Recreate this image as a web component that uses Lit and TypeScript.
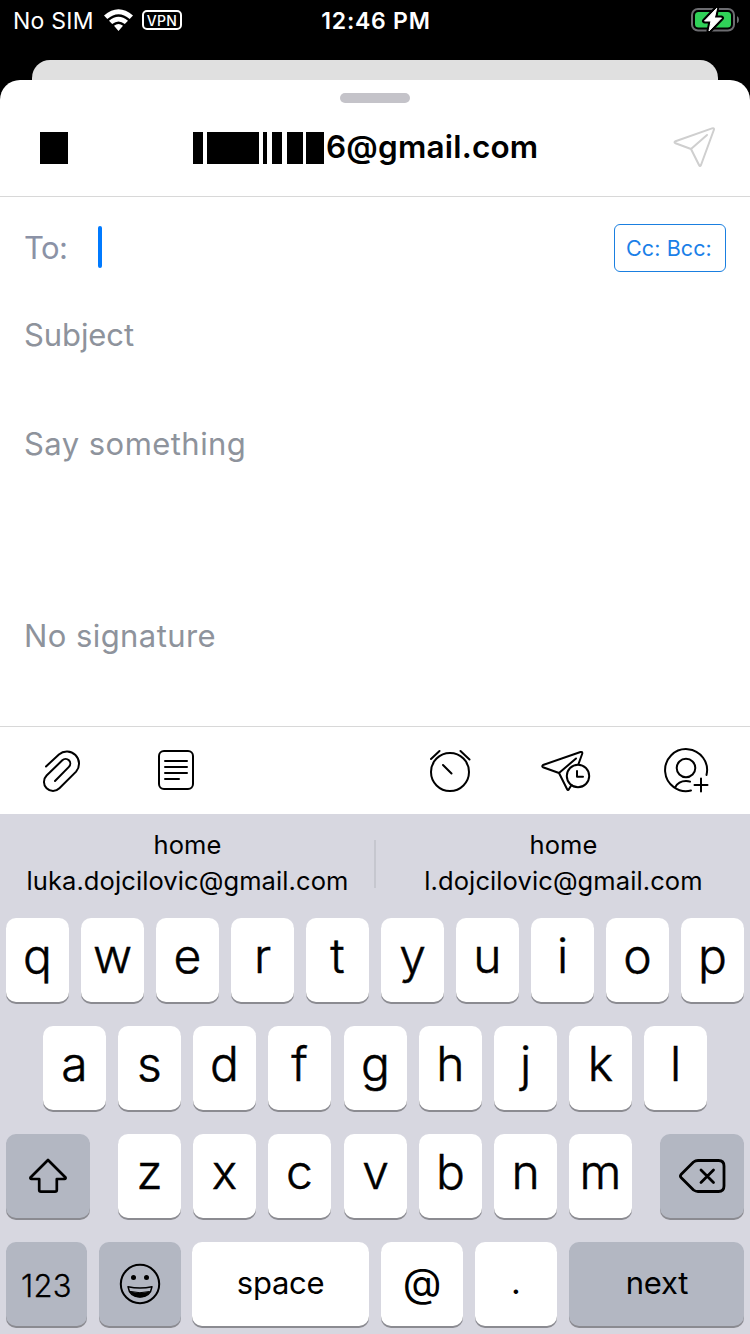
import { LitElement, html, css } from "lit";
import { customElement } from "lit/decorators.js";

@customElement("app-root")
export class AppRoot extends LitElement {
  static styles = css`
    :host { display: flex; flex-direction: column; width: 750px; height: 1334px; overflow: hidden; background: #000; color: #000; font-family: Inter, "Liberation Sans", sans-serif; }
    * { box-sizing: border-box; }
    svg { display: block; flex: none; fill: none; stroke: #000; stroke-width: 2; stroke-linecap: round; stroke-linejoin: round; }
    .status { display: grid; grid-template-columns: 1fr auto 1fr; align-items: center; height: 40px; margin-bottom: 20px; padding: 0 10px 0 13px; color: #fff; font-size: 23px; line-height: 38px; }
    .left { display: flex; align-items: center; }
    .carrier { width: 91px; letter-spacing: 0.25px; white-space: nowrap; padding-top: 2px; }
    .wifi { fill: #fff; stroke: none; }
    .vpn { margin-left: 9px; width: 40px; height: 20px; border: 2px solid #fff; border-radius: 5px; font-size: 14px; font-weight: 500; line-height: 17px; text-align: center; letter-spacing: 0.4px; }
    .time { font-weight: 600; letter-spacing: 0.75px; padding: 2px 1px 0 0; }
    .battery { justify-self: end; }
    .under { height: 20px; margin: 0 32px; background: #e0e0e0; border-radius: 18px 18px 0 0; flex: none; }
    .sheet { height: 734px; flex: none; background: #fff; border-radius: 20px 20px 0 0; display: flex; flex-direction: column; }
    .grab { width: 70px; height: 10px; border-radius: 5px; background: #c4c3c9; margin: 13px auto 0 340px; }
    .head { height: 94px; border-bottom: 1px solid #d8d8d8; display: flex; align-items: flex-start; padding: 23px 34px 0 40px; }
    .square { width: 28px; height: 32px; margin-top: 6px; background: #000; }
    .from { display: flex; margin-left: 125px; width: 480px; font-size: 31.5px; font-weight: 600; line-height: 41px; }
    .masks { flex: none; width: 133px; }
    .address { letter-spacing: 0.2px; }
    .fields { height: 529px; padding: 0 24px; color: #8e939c; font-size: 31px; }
    .to { display: flex; align-items: center; height: 100px; color: #8b92a6; }
    .tolabel { width: 74px; letter-spacing: -0.6px; }
    .caret { width: 4px; height: 42px; border-radius: 2px; background: #007aff; }
    .cc { margin: 2px 0 0 auto; width: 112px; height: 48px; border: 1px solid #1a7fe0; border-radius: 6px; color: #1a7fe8; font-size: 21.5px; line-height: 47px; text-align: center; letter-spacing: 0.1px; white-space: nowrap; padding-right: 2px; }
    .subject { line-height: 76px; letter-spacing: -0.1px; }
    .body { line-height: 142px; height: 194px; letter-spacing: 0.45px; }
    .sign { line-height: 138px; letter-spacing: 0.42px; }
    .tools { height: 88px; border-top: 1px solid #d8d8d8; display: flex; align-items: center; padding: 0 39px 2px 38px; }
    .clip { margin-right: 72px; }
    .note { margin-right: auto; }
    .alarm { margin-right: 67px; }
    .later { margin-right: 68px; }
    .keyboard { height: 520px; flex: none; background: #d7d7e0; }
    .hints { display: flex; align-items: center; height: 104px; padding-bottom: 4px; font-size: 25.5px; line-height: 36px; text-align: center; }
    .hint { flex: 1; white-space: nowrap; padding: 0 0 2px 1px; letter-spacing: 0.1px; }
    .rule { width: 2px; height: 48px; background: #c6c7cf; }
    .row { display: flex; justify-content: center; gap: 12px; height: 84px; margin-bottom: 24px; }
    .key { flex: none; width: 63px; height: 84px; border-radius: 10px; background: #fff; box-shadow: 0 2px 0 #8b8b91; font-size: 48px; font-weight: 300; -webkit-text-stroke: 0.5px #000; line-height: 75px; text-align: center; }
    .g, .v { margin-left: 1px; }
    .dark { background: #b3b7c2; font-size: 31px; display: flex; align-items: center; justify-content: center; }
    .mod { width: 84px; }
    .shift { margin-right: 16px; }
    .del { margin-left: 16px; }
    .numbers { width: 81px; letter-spacing: 0.3px; padding-top: 2px; -webkit-text-stroke: 0.3px #000; }
    .emoji { width: 82px; }
    .space, .at, .dot, .next { font-weight: 400; -webkit-text-stroke: 0; }
    .space { width: 177px; margin-left: -1px; font-size: 31px; line-height: 82px; letter-spacing: -0.3px; }
    .at { width: 82px; font-size: 40px; line-height: 81px; }
    .dot { width: 82px; font-size: 34px; line-height: 80px; }
    .next { width: 175px; padding: 0 0 3px 1px; letter-spacing: -0.2px; }
  `;

  private keys(letters: string) {
    return [...letters].map((k) => html`<div class="key ${k}">${k}</div>`);
  }

  render() {
    return html`
      <div class="status">
        <div class="left">
          <span class="carrier">No SIM</span>
          <svg class="wifi" width="29" height="23" viewBox="104 9 29 23">
            <path d="M104 15.500Q118.500 3 133 15.500L129.700 19Q118.500 9.500 107.300 19ZM109 20.700Q118.500 13 128 20.700L124.800 24Q118.500 19 112.200 24ZM114 25.700Q118.500 22.500 123 25.700L118.500 31Z"/>
          </svg>
          <span class="vpn">VPN</span>
        </div>
        <span class="time">12:46 PM</span>
        <svg class="battery" width="49" height="26" viewBox="691 7 49 26" stroke-linejoin="miter">
          <rect x="692" y="9" width="42" height="21.500" rx="6" style="stroke:#6c6c70"/>
          <rect x="695" y="12" width="36" height="15.500" rx="3.500" style="fill:#30d158;stroke:none"/>
          <path d="M737 16q2 1 2 3.700q0 2.600-2 3.600z" style="fill:#6c6c70;stroke:none"/>
          <path d="M716.500 8.500L704.500 21H711L709 31L721.500 18H714.700Z" style="fill:#000;stroke-width:5"/>
          <path d="M716.500 8.500L704.500 21H711L709 31L721.500 18H714.700Z" style="fill:#fff;stroke:#fff;stroke-width:1"/>
        </svg>
      </div>
      <div class="under"></div>
      <div class="sheet">
        <div class="grab"></div>
        <div class="head">
          <div class="square"></div>
          <div class="from">
            <svg class="masks" width="133" height="41" viewBox="193 126 133 41" style="fill:#000;stroke:none">
              <path d="M193 132h10v32h-10zM207 132h52v32h-52zM263 132h4v32h-4zM272 132h10v32h-10zM287 132h16v32h-16zM306 132h18v32h-18z"/>
            </svg>
            <span class="address">6@gmail.com</span>
          </div>
          <svg width="43" height="42" viewBox="673 126 43 42" style="stroke:#cfcfcf">
            <path d="M712 128.400L675.500 141.200Q673.500 142.300 675.500 143.300L691 149L699 165Q700 167 701 165L714 129.500Q714.200 127.700 712 128.400ZM691 149L707 135"/>
          </svg>
        </div>
        <div class="fields">
          <div class="to"><span class="tolabel">To:</span><i class="caret"></i><span class="cc">Cc: Bcc:</span></div>
          <div class="subject">Subject</div>
          <div class="body">Say something</div>
          <div class="sign">No signature</div>
        </div>
        <div class="tools">
          <svg class="clip" width="48" height="48" viewBox="38 746 48 48">
            <path d="M46 766.500L58.900 754.400A12.200 12.200 0 0 1 76.100 771.600L59.400 788.300A9 9 0 0 1 46.600 775.500L62.300 760.300A4.600 4.600 0 0 1 68.900 766.900L55 781"/>
          </svg>
          <svg class="note" width="36" height="48" viewBox="158 746 36 48">
            <rect x="159" y="751" width="34" height="38" rx="5"/>
            <path d="M165 761h22M165 767h22M165 773h22M165 779h14"/>
          </svg>
          <svg class="alarm" width="44" height="48" viewBox="428 746 44 48">
            <circle cx="450" cy="772" r="19"/>
            <path d="M431 759L439.500 751M460.500 751L469.500 759.500M443 765L451.500 773.500"/>
          </svg>
          <svg class="later" width="54" height="48" viewBox="539 746 54 48">
            <path d="M578.500 764L582.300 753.500Q582.500 751.500 580.500 752L543 765Q541.500 766.200 543 767.200L559 773L567 789Q568 791 569 789L571.500 785M559 773L576 758.500"/>
            <circle cx="578" cy="776" r="11.200"/>
            <path d="M577 771v5.700h6"/>
          </svg>
          <svg width="50" height="48" viewBox="661 746 50 48">
            <path d="M706.500 775A21 21 0 1 0 691 790.500M675 787.500Q678.500 781 686 781Q688.500 781 690 781.700M694.500 785h13M701 778.500v13"/>
            <circle cx="686" cy="768" r="9.300"/>
          </svg>
        </div>
      </div>
      <div class="keyboard">
        <div class="hints">
          <div class="hint">home<br>luka.dojcilovic@gmail.com</div>
          <div class="rule"></div>
          <div class="hint">home<br>l.dojcilovic@gmail.com</div>
        </div>
        <div class="row">${this.keys("qwertyuiop")}</div>
        <div class="row">${this.keys("asdfghjkl")}</div>
        <div class="row">
          <div class="key dark mod shift">
            <svg width="42" height="40" viewBox="27 1156 42 40" style="stroke-width:2.700">
              <path d="M48 1160L30.500 1177.500Q30 1179 31.500 1179H39.200V1190Q39.200 1191.700 41 1191.700H55Q56.800 1191.700 56.800 1190V1179H64.500Q66 1179 65.500 1177.500Z"/>
            </svg>
          </div>
          ${this.keys("zxcvbnm")}
          <div class="key dark mod del">
            <svg width="48" height="38" viewBox="678 1157 48 38" style="stroke-width:2.800">
              <path d="M681 1174.500L693.500 1162Q695.500 1160.500 698 1160.500H718.500Q724 1160.500 724 1166V1186Q724 1191.500 718.500 1191.500H698Q695.500 1191.500 693.500 1190L681 1177.500Q679.800 1176 681 1174.500ZM701 1170L713.500 1182.500M713.500 1170L701 1182.500"/>
            </svg>
          </div>
        </div>
        <div class="row">
          <div class="key dark numbers">123</div>
          <div class="key dark emoji">
            <svg width="42" height="42" viewBox="119 1263 42 42">
              <circle cx="140" cy="1284" r="19.200"/>
              <path d="M133.500 1277.500h.01M146.500 1277.500h.01" style="stroke-width:5"/>
              <path d="M128 1286.700Q140 1289.500 152 1286.700Q150.500 1297 140 1297Q129.500 1297 128 1286.700Z" style="stroke-width:1.500"/>
              <path d="M130.500 1291.500Q140 1294 149.500 1291.500Q146.500 1297 140 1297Q133.500 1297 130.500 1291.500Z" style="fill:#000;stroke-width:1"/>
            </svg>
          </div>
          <div class="key space">space</div>
          <div class="key at">@</div>
          <div class="key dot">.</div>
          <div class="key dark next">next</div>
        </div>
      </div>
    `;
  }
}
